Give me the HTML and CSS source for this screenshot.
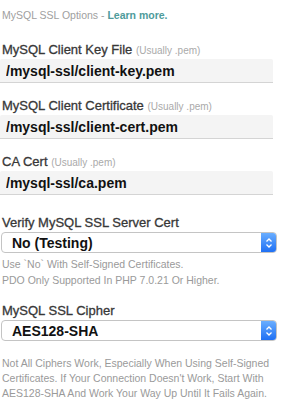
FILE: index.html
```html
<!DOCTYPE html>
<html lang="en">
<head>
    <meta charset="UTF-8">
    <meta name="viewport" content="width=device-width, initial-scale=1.0">
    <title>MySQL SSL Options</title>
    <link rel="stylesheet" href="styles.css">
</head>
<body>
    <div class="ssl-options">
        <p class="intro">MySQL SSL Options - <a href="#" class="learn-more">Learn more.</a></p>

        <div class="field">
            <label for="sslKey">MySQL Client Key File <span class="hint">(Usually .pem)</span></label>
            <input type="text" id="sslKey" value="/mysql-ssl/client-key.pem">
        </div>
        <div class="field">
            <label for="sslCert">MySQL Client Certificate <span class="hint">(Usually .pem)</span></label>
            <input type="text" id="sslCert" value="/mysql-ssl/client-cert.pem">
        </div>
        <div class="field">
            <label for="sslCa">CA Cert <span class="hint">(Usually .pem)</span></label>
            <input type="text" id="sslCa" value="/mysql-ssl/ca.pem">
        </div>

        <div class="field field-select">
            <label for="sslVerify">Verify MySQL SSL Server Cert</label>
            <div class="select-box">
                <select id="sslVerify">
                    <option>No (Testing)</option>
                    <option>Yes</option>
                </select>
                <span class="select-arrows">
                    <svg width="8" height="12" viewBox="0 0 8 12"><path d="M1.5 4.5 L4 2 L6.5 4.5 M1.5 7.5 L4 10 L6.5 7.5" fill="none" stroke="#fff" stroke-width="1.3"/></svg>
                </span>
            </div>
            <p class="help">Use `No` With Self-Signed Certificates.<br>PDO Only Supported In PHP 7.0.21 Or Higher.</p>
        </div>

        <div class="field field-select">
            <label for="sslCipher">MySQL SSL Cipher</label>
            <div class="select-box">
                <select id="sslCipher">
                    <option>AES128-SHA</option>
                    <option>AES256-SHA</option>
                </select>
                <span class="select-arrows">
                    <svg width="8" height="12" viewBox="0 0 8 12"><path d="M1.5 4.5 L4 2 L6.5 4.5 M1.5 7.5 L4 10 L6.5 7.5" fill="none" stroke="#fff" stroke-width="1.3"/></svg>
                </span>
            </div>
            <p class="help help-cipher">Not All Ciphers Work, Especially When Using Self-Signed<br>Certificates. If Your Connection Doesn't Work, Start With<br>AES128-SHA And Work Your Way Up Until It Fails Again.</p>
        </div>
    </div>
</body>
</html>
```

FILE: styles.css
```css
body {
    margin: 0;
    padding: 0;
    background-color: #fff;
    font-family: "Liberation Sans", Arial, sans-serif;
    color: #333;
}
.ssl-options {
    width: 276px;
}
.intro {
    margin: 7px 0 0 2px;
    font-size: 10.5px;
    line-height: 16px;
    color: #a0a0a0;
}
.learn-more {
    color: #4e9b9b;
    font-weight: bold;
    text-decoration: none;
}
.field {
    margin-top: 18px;
}
.field + .field {
    margin-top: 14px;
}
.field label {
    display: block;
    padding-left: 2px;
    font-size: 13px;
    line-height: 17px;
    color: #383838;
    -webkit-text-stroke: 0.3px #383838;
}
.hint {
    font-size: 10px;
    color: #aaa;
    -webkit-text-stroke: 0;
}
.field input[type="text"] {
    display: block;
    box-sizing: border-box;
    width: 273px;
    height: 24px;
    margin: 0;
    padding: 0 6px;
    border: none;
    border-bottom: 1px solid #d4d4d4;
    border-radius: 2px 2px 0 0;
    background-color: #f4f4f4;
    font-family: "Liberation Sans", Arial, sans-serif;
    font-weight: bold;
    font-size: 14px;
    color: #111;
}
.field + .field-select {
    margin-top: 19px;
}
.field-select + .field-select {
    margin-top: 14px;
}
.select-box {
    display: flex;
    box-sizing: border-box;
    width: 276px;
    height: 21px;
    margin: 1px 0 0 1px;
    border: 1px solid #c4c4c4;
    border-radius: 4px;
    background-color: #fff;
    overflow: hidden;
}
.select-box select {
    flex: 1;
    -webkit-appearance: none;
    appearance: none;
    border: none;
    outline: none;
    background: transparent;
    padding: 0 0 0 10px;
    font-family: "Liberation Sans", Arial, sans-serif;
    font-weight: bold;
    font-size: 14px;
    color: #111;
}
.select-arrows {
    display: flex;
    align-items: center;
    justify-content: center;
    width: 15px;
    background: linear-gradient(#6aaeff, #1f70f4);
}
.help {
    margin: 3px 0 0 2px;
    font-size: 10.5px;
    line-height: 16px;
    color: #9a9a9a;
}
.help-cipher {
    margin-top: 15px;
    line-height: 15px;
}
```
